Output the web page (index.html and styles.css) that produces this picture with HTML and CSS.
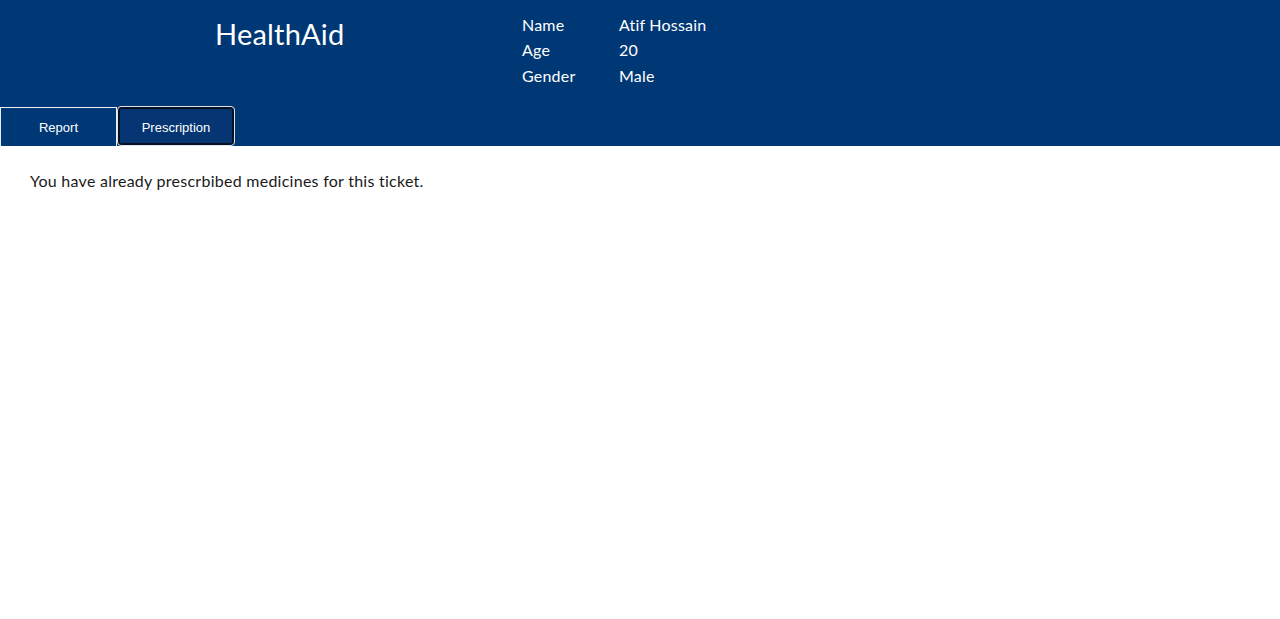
FILE: index.html
```html
<!DOCTYPE html>
<html>
<head>
<meta charset="utf-8">
<link rel="stylesheet" href="styles.css">
</head>
<body>
<header class="header">
  <div class="top">
    <div class="brand">HealthAid</div>
    <div class="patient">
      <div class="row"><span class="label">Name</span><span class="value">Atif Hossain</span></div>
      <div class="row"><span class="label">Age</span><span class="value">20</span></div>
      <div class="row"><span class="label">Gender</span><span class="value">Male</span></div>
    </div>
  </div>
  <nav class="tabs">
    <button class="tab">Report</button>
    <button class="tab active">Prescription</button>
  </nav>
</header>
<main class="content">
  <p class="message">You have already prescrbibed medicines for this ticket.</p>
</main>
</body>
</html>
```

FILE: styles.css
```css
* { box-sizing: border-box; }
html, body { margin: 0; padding: 0; background: #fff; }
body { font-family: "Lato", "Noto Sans", sans-serif; color: #1a1a1a; }
.header { background: #003876; color: #fff; height: 146px; display: flex; flex-direction: column; }
.top { display: flex; height: 107px; }
.brand { width: 522px; padding-left: 215px; padding-top: 16px; font-size: 29px; letter-spacing: 0.2px; line-height: 36px; }
.patient { padding-top: 14px; font-size: 16px; letter-spacing: 0.2px; }
.row { display: flex; height: 25.3px; line-height: 21px; }
.label { width: 97px; }
.tabs { display: flex; height: 39px; }
.tab { font-family: "Liberation Sans", Arial, sans-serif; font-size: 13px; color: #fff; background: #003876; border: 1px solid #e8ecf3; border-bottom: none; width: 117px; height: 39px; padding: 1px 0 0; margin: 0; }
.tab.active { background: #053572; border: 2px solid #0a1020; border-radius: 3px; outline: 1px solid #dfe5ef; width: 116px; margin-left: 1px; height: 38px; padding: 2px 0 0; }
.content { padding: 24px 30px; }
.message { margin: 0; font-size: 16px; line-height: 22px; letter-spacing: 0.26px; }
```
